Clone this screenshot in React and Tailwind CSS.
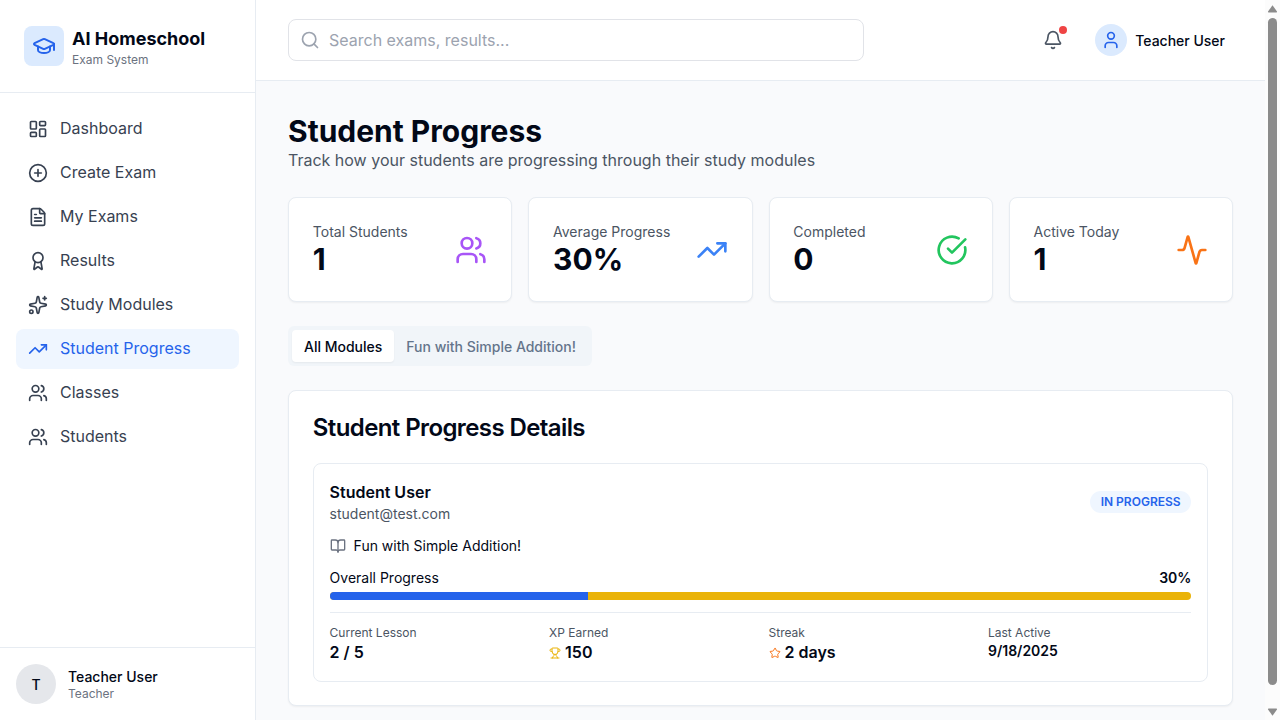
import React from 'react';
import {
  Activity, Award, Bell, BookOpen, CircleCheckBig, CirclePlus, FileText, GraduationCap,
  LayoutDashboard, Search, Sparkles, Star, TrendingUp, Trophy, User, Users,
} from 'lucide-react';

const navItems = [
  { label: 'Dashboard', Icon: LayoutDashboard },
  { label: 'Create Exam', Icon: CirclePlus },
  { label: 'My Exams', Icon: FileText },
  { label: 'Results', Icon: Award },
  { label: 'Study Modules', Icon: Sparkles },
  { label: 'Student Progress', Icon: TrendingUp, active: true },
  { label: 'Classes', Icon: Users },
  { label: 'Students', Icon: Users },
];

const stats = [
  { label: 'Total Students', value: '1', Icon: Users, color: 'text-[#a855f7]' },
  { label: 'Average Progress', value: '30%', Icon: TrendingUp, color: 'text-[#3b82f6]' },
  { label: 'Completed', value: '0', Icon: CircleCheckBig, color: 'text-[#22c55e]' },
  { label: 'Active Today', value: '1', Icon: Activity, color: 'text-[#f97316]' },
];

function Sidebar() {
  return (
    <aside className="flex w-64 shrink-0 flex-col border-r border-[#e7ecf2] bg-white">
      <div className="flex items-center gap-2 border-b border-[#e7ecf2] p-6">
        <div className="flex size-10 items-center justify-center rounded-lg bg-[#dbeafe]">
          <GraduationCap className="size-6 text-[#2563eb]" />
        </div>
        <div>
          <h1 className="-mb-px pt-px text-lg font-bold">AI Homeschool</h1>
          <p className="text-xs text-[#6b7280]">Exam System</p>
        </div>
      </div>
      <nav className="flex flex-1 flex-col gap-1 p-4">
        {navItems.map(({ label, Icon, active }) => (
          <a
            key={label}
            className={
              active
                ? 'flex h-10 items-center gap-3 rounded-lg bg-[#eff6ff] px-3 text-[#2563eb]'
                : 'flex h-10 items-center gap-3 rounded-lg px-3 text-[#374151]'
            }
          >
            <Icon className="size-5" />
            <span className="pb-0.5">{label}</span>
          </a>
        ))}
      </nav>
      <div className="flex items-center gap-3 border-t border-[#e7ecf2] p-4">
        <div className="flex size-10 items-center justify-center rounded-full bg-[#e5e7eb] pt-0.5 text-sm font-medium">T</div>
        <div>
          <p className="-mb-px pt-px text-sm font-medium">Teacher User</p>
          <p className="text-xs text-[#6b7280]">Teacher</p>
        </div>
      </div>
    </aside>
  );
}

function Header() {
  return (
    <header className="flex h-[80.8px] shrink-0 items-center justify-between border-b border-[#e7ecf2] bg-white px-8">
      <div className="flex h-[42px] w-xl items-center gap-[9px] rounded-lg border border-[#e1e3e8] px-[11px]">
        <Search className="size-5 text-[#9ca3af]" />
        <span className="text-[#9ca3af]">Search exams, results...</span>
      </div>
      <div className="flex items-center gap-4">
        <button className="relative p-2 text-[#4b5563]">
          <Bell className="size-5" />
          <span className="absolute top-1 right-1 size-2 rounded-full bg-[#ef4444]" />
        </button>
        <button className="flex items-center gap-2 p-2">
          <span className="flex size-8 items-center justify-center rounded-full bg-[#dbeafe]">
            <User className="size-5 text-[#2563eb]" />
          </span>
          <span className="pt-0.5 text-sm font-medium">Teacher User</span>
        </button>
      </div>
    </header>
  );
}

function StatCard({ label, value, Icon, color }) {
  return (
    <div className="flex items-center justify-between rounded-lg border border-[#e7ecf2] bg-white p-[23.8px] shadow-[0_1px_2px_0_rgb(0_0_0/0.05)]">
      <div>
        <p className="text-sm text-[#4b5563]">{label}</p>
        <p className="-mt-px pb-px text-3xl font-bold">{value}</p>
      </div>
      <Icon className={`size-8 ${color}`} />
    </div>
  );
}

function StudentCard() {
  return (
    <div className="flex flex-col gap-3 rounded-lg border border-[#e7ecf2] p-[15.8px]">
      <div className="flex items-center justify-between">
        <div>
          <h3 className="font-semibold">Student User</h3>
          <p className="text-sm text-[#4b5563]">student@test.com</p>
        </div>
        <span className="rounded-full bg-[#eff6ff] px-[10.8px] py-[2.8px] text-xs font-semibold text-[#2563eb]">
          IN PROGRESS
        </span>
      </div>
      <div className="flex items-center gap-2 text-sm">
        <BookOpen className="size-4 text-[#6b7280]" />
        <span>Fun with Simple Addition!</span>
      </div>
      <div className="flex flex-col gap-1">
        <div className="flex justify-between text-sm">
          <span>Overall Progress</span>
          <span className="font-semibold">30%</span>
        </div>
        <div className="h-2 overflow-hidden rounded-full bg-[#eab308]">
          <div className="h-full w-[30%] bg-[#2563eb]" />
        </div>
      </div>
      <div className="grid grid-cols-4 gap-4 border-t border-[#e7ecf2] pt-[11.8px]">
        <div>
          <p className="text-xs text-[#4b5563]">Current Lesson</p>
          <p className="-mt-px pb-px font-semibold">2 / 5</p>
        </div>
        <div>
          <p className="text-xs text-[#4b5563]">XP Earned</p>
          <p className="flex h-6 items-center gap-1 font-semibold">
            <Trophy className="size-3 text-[#eab308]" />
            <span className="pb-0.5">150</span>
          </p>
        </div>
        <div>
          <p className="text-xs text-[#4b5563]">Streak</p>
          <p className="flex h-6 items-center gap-1 font-semibold">
            <Star className="size-3 text-[#f97316]" />
            <span className="pb-0.5">2 days</span>
          </p>
        </div>
        <div>
          <p className="text-xs text-[#4b5563]">Last Active</p>
          <p className="text-sm font-semibold">9/18/2025</p>
        </div>
      </div>
    </div>
  );
}

function Scrollbar() {
  return (
    <div className="flex w-[15px] shrink-0 flex-col items-center bg-[#fcfcfc]">
      <svg className="h-[18px] w-[15px]" viewBox="0 0 15 18">
        <path d="M7.5 5.2 L12 11.5 Q12.2 12.5 11.4 12.5 H3.6 Q2.8 12.5 3 11.5 Z" fill="#8b8b8b" />
      </svg>
      <div className="h-[667px] w-[9px] rounded-full bg-[#8b8b8b]" />
      <svg className="mt-auto h-[18px] w-[15px]" viewBox="0 0 15 18">
        <path d="M7.5 13.8 L12 7.5 Q12.2 6.5 11.4 6.5 H3.6 Q2.8 6.5 3 7.5 Z" fill="#8b8b8b" />
      </svg>
    </div>
  );
}

export default function App() {
  return (
    <div className="flex h-screen overflow-hidden bg-[#f9fafc] font-['Inter',sans-serif] text-base text-[#020817]">
      <Sidebar />
      <div className="flex min-w-0 flex-1 flex-col">
        <Header />
        <main className="flex flex-1 flex-col gap-6 p-8">
          <div>
            <h1 className="text-3xl font-bold">Student Progress</h1>
            <p className="-mt-px pb-px text-[#4b5563]">Track how your students are progressing through their study modules</p>
          </div>
          <div className="grid grid-cols-4 gap-4">
            {stats.map((s) => (
              <StatCard key={s.label} {...s} />
            ))}
          </div>
          <div className="flex h-10 items-center self-start rounded-md bg-[#f1f5f9] p-1 text-sm font-medium text-[#64748b]">
            <span className="rounded-sm bg-white px-3 pt-[7px] pb-[5px] text-[#020817] shadow-[0_1px_2px_0_rgb(0_0_0/0.05)]">All Modules</span>
            <span className="px-3 pt-[7px] pb-[5px]">Fun with Simple Addition!</span>
          </div>
          <section className="rounded-lg border border-[#e7ecf2] bg-white p-[23.8px] shadow-[0_1px_2px_0_rgb(0_0_0/0.05)]">
            <h2 className="h-12 pt-px text-2xl leading-none font-semibold tracking-tight">Student Progress Details</h2>
            <StudentCard />
          </section>
        </main>
      </div>
      <Scrollbar />
    </div>
  );
}
